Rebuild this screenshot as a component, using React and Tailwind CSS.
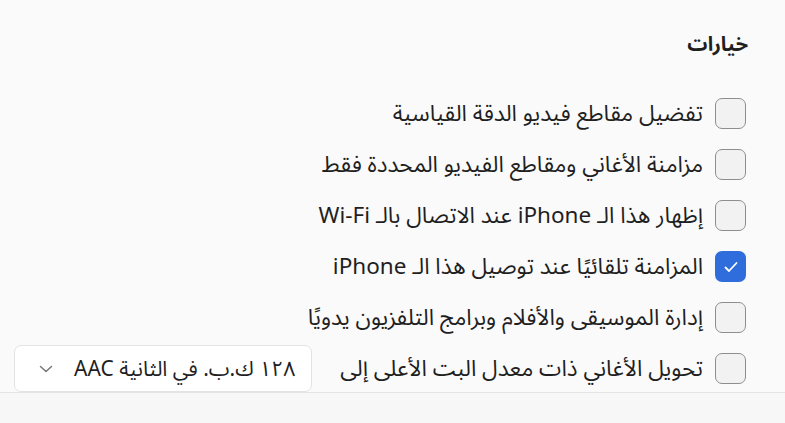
import React from 'react'

const rows = [
  { label: 'تفضيل مقاطع فيديو الدقة القياسية' },
  { label: 'مزامنة الأغاني ومقاطع الفيديو المحددة فقط' },
  { label: 'إظهار هذا الـ iPhone عند الاتصال بالـ Wi-Fi' },
  { label: 'المزامنة تلقائيًا عند توصيل هذا الـ iPhone', checked: true },
  { label: 'إدارة الموسيقى والأفلام وبرامج التلفزيون يدويًا' },
]

function Box({ checked }) {
  return checked ? (
    <span className="w-[31px] h-[31px] shrink-0 rounded-[7px] bg-[#2e6ddb] flex items-center justify-center">
      <svg width="16" height="16" viewBox="0 0 16 16" fill="none">
        <path d="M2.5 8.5l3.5 3.5 7.5-8" stroke="white" strokeWidth="1.8" strokeLinecap="round" strokeLinejoin="round" />
      </svg>
    </span>
  ) : (
    <span className="w-[31px] h-[31px] shrink-0 rounded-[7px] border-[1.5px] border-[#8e8e8e] bg-[#f2f2f2]" />
  )
}

export default function App() {
  return (
    <div dir="rtl" className="w-[785px] h-[423px] bg-[#f7f7f7] text-[#1f1f1f] overflow-hidden"
      style={{ fontFamily: '"Noto Sans", "Noto Sans Arabic", "DejaVu Sans", sans-serif' }}>
      <div className="h-[392px] bg-[#fafafa] overflow-hidden pt-[27px]">
        <div className="pr-[37px] text-[20px] font-bold leading-[34px]">خيارات</div>
        <div className="mt-[27px] pr-[39px] flex flex-col">
          {rows.map((r, i) => (
            <div key={i} className="h-[51px] flex items-center gap-[12px]">
              <Box checked={r.checked} />
              <span className="text-[22.5px] leading-none">{r.label}</span>
            </div>
          ))}
          <div className="h-[51px] flex items-center gap-[12px]">
            <Box />
            <span className="text-[22.5px] leading-none">تحويل الأغاني ذات معدل البت الأعلى إلى</span>
            <div className="mr-[16px] w-[298px] h-[47px] shrink-0 bg-white border border-[#e3e3e3] rounded-[7px] flex items-center pr-[16px] pl-[24px] justify-between">
              <span className="text-[21px] leading-none">١٢٨ ك.ب. في الثانية AAC</span>
              <svg width="14" height="10" viewBox="0 0 14 10" fill="none">
                <path d="M1.5 2.5l5.5 5 5.5-5" stroke="#777" strokeWidth="1.5" strokeLinecap="round" strokeLinejoin="round" />
              </svg>
            </div>
          </div>
        </div>
      </div>
      <div className="h-[31px] border-t border-[#e4e4e4] bg-[#f7f7f7]" />
    </div>
  )
}
